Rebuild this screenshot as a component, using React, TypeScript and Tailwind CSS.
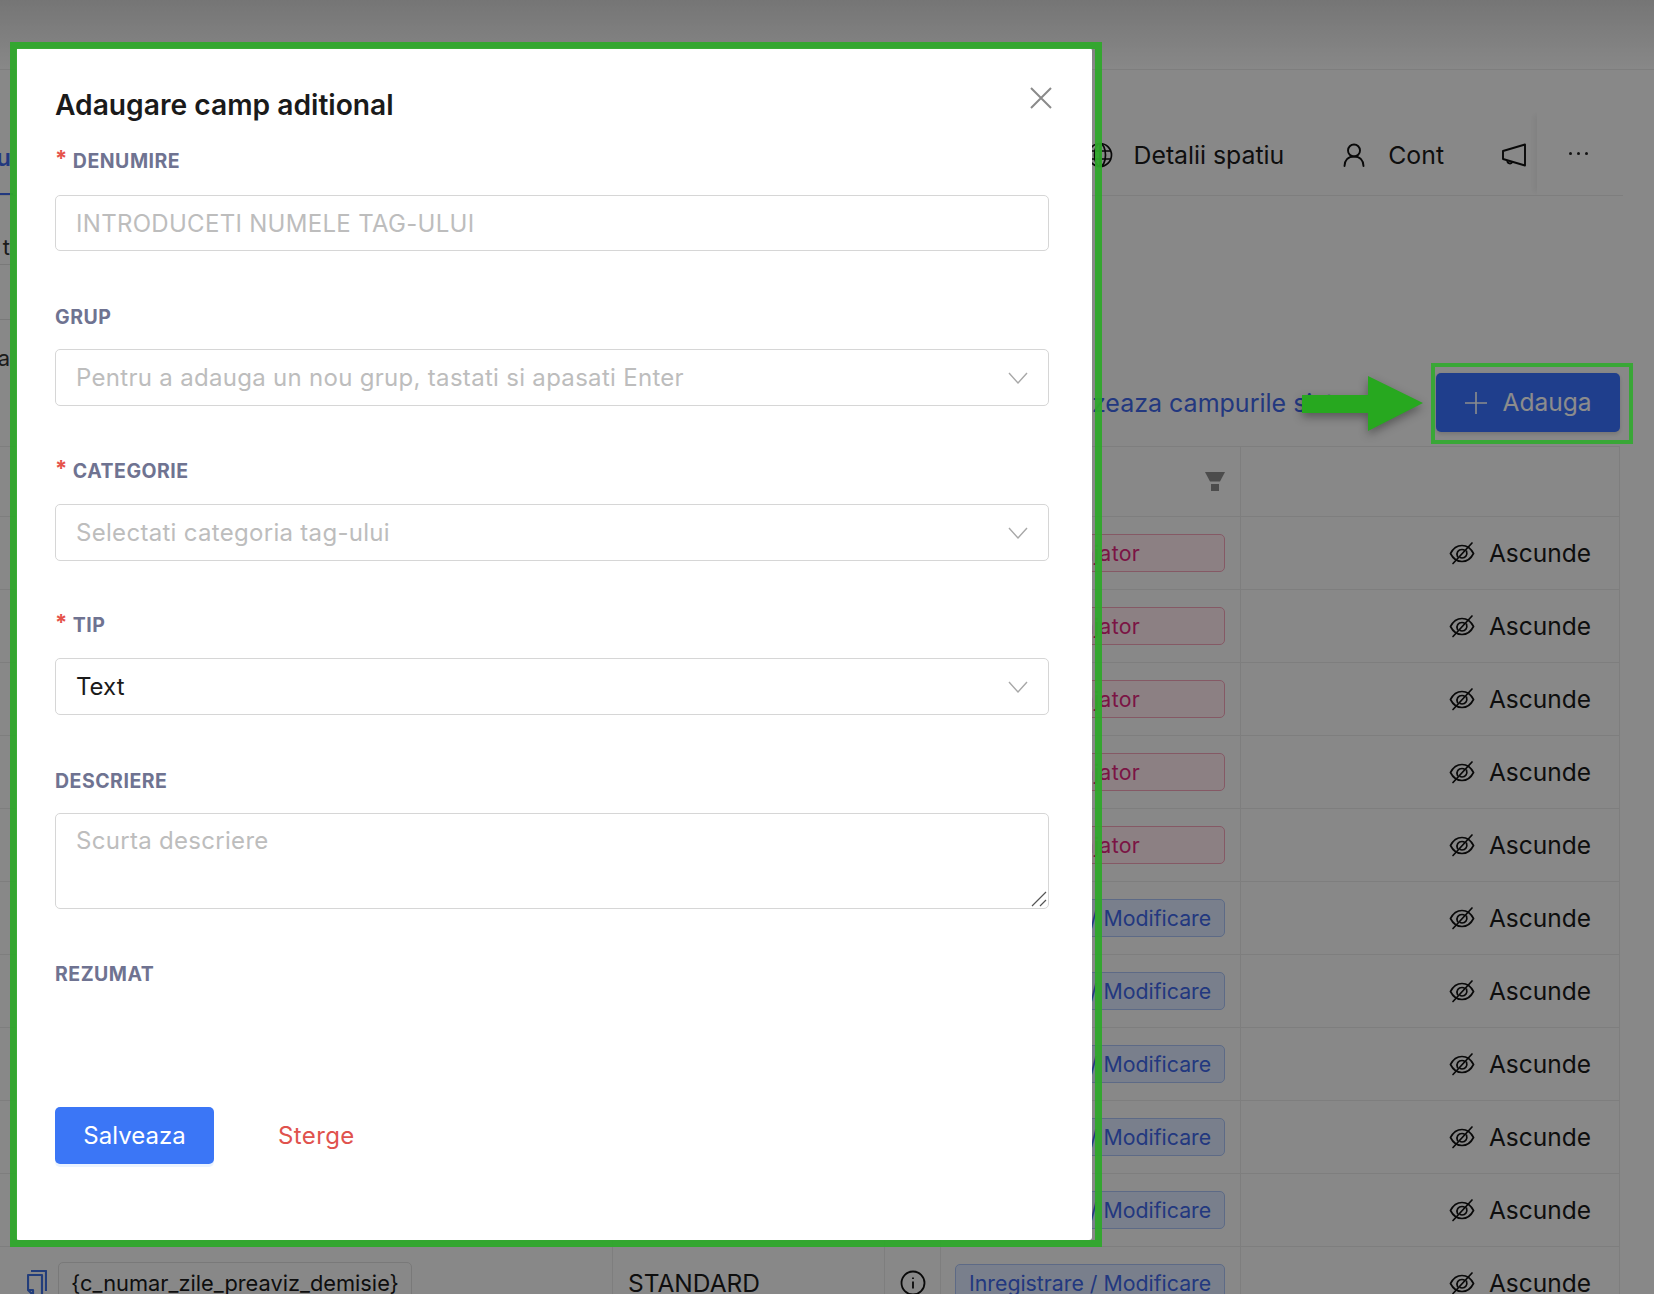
import React from "react";

const font = { fontFamily: "Inter, 'Noto Sans', sans-serif" };

function EyeOff() {
  return (
    <svg width="26" height="24" viewBox="0 0 26 24" fill="none" stroke="#111" strokeWidth="1.7" strokeLinecap="round" className="shrink-0">
      <path d="M1.5 12.5C4.5 6.5 8.5 4.5 13 4.5s8.5 2 11.5 8c-3 6-7 8-11.5 8s-8.5-2-11.5-8Z" />
      <path d="M8.5 15.5c-1.6-3.8.8-7 4.5-7 1.2 0 2 .3 2.8.9M17.5 10c1.2 4-1 7-4.5 7-.7 0-1.2-.1-1.8-.4" />
      <path d="M4 22.5 23 2" />
    </svg>
  );
}

function Chevron() {
  return (
    <svg width="20" height="12" viewBox="0 0 20 12" fill="none" stroke="#a8a8a8" strokeWidth="1.4" className="shrink-0">
      <path d="M1 1l9 10 9-10" />
    </svg>
  );
}

function Field({ label, required, className, children }: { label: string; required?: boolean; className: string; children?: React.ReactNode }) {
  return (
    <div className={className}>
      <div className="flex h-[24px] items-center text-[19.5px] leading-[24px] font-bold tracking-[0.5px] text-[#6f7391]">
        {required && <span className="mr-[5px] mt-[-6px] text-[22px] font-bold text-[#e5534b]">*</span>}
        {label}
      </div>
      {children}
    </div>
  );
}

function SelectBox({ text, dark, className }: { text: string; dark?: boolean; className: string }) {
  return (
    <div className={`flex h-[57px] items-center justify-between rounded-[5px] border border-[#d6d6d6] pl-[20px] pr-[20px] ${className}`}>
      <span className={dark ? "text-[24px] text-[#1a1a1a]" : "text-[24px] tracking-[0.3px] text-[#bdbdbd]"}>{text}</span>
      <Chevron />
    </div>
  );
}

function Row({ kind, name }: { kind: "pink" | "blue"; name?: boolean }) {
  const tag =
    kind === "pink"
      ? "border-[#f3a3b8] bg-[#ffe9ee] tracking-[0.3px] text-[#e0267c]"
      : "border-[#a9c2f5] bg-[#dce8ff] text-[#3f66e8]";
  return (
    <div className="flex h-[73px] shrink-0 border-b border-[#e6e6e6] text-[24.5px] text-[#1a1a1a]">
      <div className="flex w-[613px] shrink-0 items-center border-r border-[#e6e6e6] pl-[27px]">
        {name && (
          <>
            <svg width="20" height="26" viewBox="0 0 20 26" fill="none" stroke="#3f6fe0" strokeWidth="2.2" strokeLinejoin="round" className="shrink-0">
              <path d="M4 1h15v20M1 5h14v20H6l-5-5V5ZM1 20h5v5" />
            </svg>
            <span className="ml-[11px] rounded-[5px] border border-[#dcdcdc] bg-[#f8f8f8] px-[12px] py-[4px] text-[21.8px] whitespace-nowrap">{"{c_numar_zile_preaviz_demisie}"}</span>
          </>
        )}
      </div>
      <div className="flex w-[272px] shrink-0 items-center border-r border-[#e6e6e6] pl-[15px]">{name && "STANDARD"}</div>
      <div className="flex w-[56px] shrink-0 items-center justify-center border-r border-[#e6e6e6]">
        {name && (
          <svg width="26" height="26" viewBox="0 0 26 26" fill="none" stroke="#111" strokeWidth="1.8">
            <circle cx="13" cy="13" r="11.5" />
            <path d="M13 11.5v7M13 7.5v1.6" />
          </svg>
        )}
      </div>
      <div className="flex w-[300px] shrink-0 items-center border-r border-[#e6e6e6] pl-[14px]">
        <span className={`flex h-[38px] w-[270px] items-center rounded-[5px] border pl-[13px] pt-[2px] text-[21.3px] whitespace-nowrap ${tag}`}>
          {kind === "pink" ? "Pentru angajator" : "Inregistrare / Modificare"}
        </span>
      </div>
      <div className="flex w-[379px] shrink-0 items-center justify-end gap-[14px] border-r border-[#e6e6e6] pr-[28px]">
        <EyeOff />
        <span>Ascunde</span>
      </div>
    </div>
  );
}

export default function App() {
  const kinds: ("pink" | "blue")[] = ["pink", "pink", "pink", "pink", "pink", "blue", "blue", "blue", "blue", "blue"];
  return (
    <div className="relative h-[1294px] w-[1654px] overflow-hidden bg-[#f8f8f8]" style={font}>
      {/* page under the overlay */}
      <div className="h-[70px] border-b border-[#e6e6e6] bg-linear-to-b from-[#d6d6d6] to-[#f8f8f8]" />
      <div className="flex h-[126px] w-[1623px] items-end border-b border-[#e6e6e6]">
        <div className="flex h-[62px] w-[13px] shrink-0 justify-end overflow-hidden border-b-2 border-[#3f66e8] pt-[5px] pr-[2px] text-[24px] leading-[40px] font-semibold text-[#3f66e8]">
          <span className="whitespace-nowrap">ou</span>
        </div>
        <div className="ml-auto flex items-center pb-[20px] text-[24.8px] leading-[40px] text-[#1a1a1a]">
          <svg width="26" height="26" viewBox="0 0 26 26" fill="none" stroke="#111" strokeWidth="1.7">
            <circle cx="13" cy="13" r="11.5" />
            <ellipse cx="13" cy="13" rx="5.5" ry="11.5" />
            <path d="M13 1.5v23M2 9h22M2 17h22" />
          </svg>
          <span className="ml-[21px]">Detalii spatiu</span>
          <svg width="22" height="24" viewBox="0 0 22 24" fill="none" stroke="#111" strokeWidth="1.9" strokeLinecap="round" className="ml-[59px]">
            <circle cx="11" cy="7.5" r="6" />
            <path d="M1.5 23c0-5.5 3.5-9.5 9.5-9.5s9.5 4 9.5 9.5" />
          </svg>
          <span className="ml-[23px]">Cont</span>
          <svg width="26" height="24" viewBox="0 0 26 24" fill="none" stroke="#111" strokeWidth="1.9" strokeLinejoin="round" className="ml-[57px] mr-[10px]">
            <path d="M24 1.5v21L2 16V8l22-6.5Z" />
            <path d="M6.5 17.5c-.8 3 3.8 4.2 5 1" />
          </svg>
        </div>
        <div className="flex h-[83px] w-[86px] shrink-0 items-center justify-center bg-[#f8f8f8] pr-[4px] shadow-[-6px_0_6px_-3px_rgba(0,0,0,0.06)]">
          <div className="flex gap-[5px]">
            <span className="h-[3px] w-[3px] rounded-full bg-[#222]" />
            <span className="h-[3px] w-[3px] rounded-full bg-[#222]" />
            <span className="h-[3px] w-[3px] rounded-full bg-[#222]" />
          </div>
        </div>
      </div>
      <div className="flex h-[250px] w-[1620px]">
        <div className="flex w-[12px] shrink-0 flex-col overflow-hidden text-[22px] text-[#333]">
          <div className="flex h-[69px] items-center justify-end border-b border-[#dcdcdc] pt-[34px] pr-[2px]"><span>t</span></div>
          <div className="h-[55px] border-b border-[#dcdcdc]" />
          <div className="flex h-[57px] items-center justify-end pt-[20px] pr-[2px]"><span className="whitespace-nowrap">ta</span></div>
        </div>
        <div className="flex flex-1 items-end justify-end pb-[14px]">
          <span className="mb-[9px] mr-[66px] text-[25px] leading-[40px] whitespace-nowrap text-[#3f66e8]">Vizualizeaza campurile sistem</span>
          <button className="flex h-[59px] w-[184px] items-center justify-center gap-[16px] rounded-[5px] bg-[#3a72ff] text-[24.5px] text-white shadow-[0_2px_4px_rgba(0,0,0,0.15)]">
            <svg width="22" height="22" viewBox="0 0 22 22" fill="none" stroke="#fff" strokeWidth="1.6"><path d="M11 0v22M0 11h22" /></svg>
            Adauga
          </button>
        </div>
      </div>
      <div className="flex w-[1620px] flex-col border-t border-[#e6e6e6]">
        <div className="flex h-[70px] shrink-0 border-b border-[#e6e6e6]">
          <div className="flex w-[1241px] shrink-0 items-center justify-end border-r border-[#e6e6e6] pr-[15px]">
            <svg width="20" height="19" viewBox="0 0 20 19" fill="#8a8a8a"><path d="M0 0h20l-5 9.5H5L0 0Z" /><path d="M6 12h8v7H6z" /></svg>
          </div>
          <div className="flex-1 border-r border-[#e6e6e6]" />
        </div>
        {kinds.map((k, i) => <Row key={i} kind={k} />)}
        <Row kind="blue" name />
      </div>

      {/* dim overlay */}
      <div className="absolute inset-0 bg-black/45" />

      {/* modal */}
      <div className="absolute left-[16px] top-[48px] flex h-[1192px] w-[1076px] flex-col rounded-[3px] bg-white pl-[39px] pr-[43px]">
        <h2 className="mt-[39px] h-[36px] text-[28.2px] leading-[36px] font-semibold text-[#1a1a1a]">Adaugare camp aditional</h2>
        <svg width="24" height="24" viewBox="0 0 24 24" fill="none" stroke="#8a8a8a" strokeWidth="2" className="absolute left-[1013px] top-[38px]">
          <path d="M2 2l20 20M22 2L2 22" />
        </svg>
        <Field label="DENUMIRE" required className="mt-[26px]">
          <input
            readOnly
            placeholder="INTRODUCETI NUMELE TAG-ULUI"
            className="mt-[22px] block h-[56px] w-full rounded-[5px] border border-[#d6d6d6] pl-[20px] text-[24px] tracking-[0.3px] outline-none placeholder:text-[#bdbdbd]"
          />
        </Field>
        <Field label="GRUP" className="mt-[54px]">
          <SelectBox className="mt-[20px]" text="Pentru a adauga un nou grup, tastati si apasati Enter" />
        </Field>
        <Field label="CATEGORIE" required className="mt-[53px]">
          <SelectBox className="mt-[21px]" text="Selectati categoria tag-ului" />
        </Field>
        <Field label="TIP" required className="mt-[52px]">
          <SelectBox className="mt-[21px]" text="Text" dark />
        </Field>
        <Field label="DESCRIERE" className="mt-[54px]">
          <div className="relative mt-[20px]">
            <textarea
              readOnly
              placeholder="Scurta descriere"
              className="block h-[96px] w-full resize-none rounded-[5px] border border-[#d6d6d6] pl-[20px] pt-[9px] text-[24px] tracking-[0.3px] outline-none placeholder:text-[#bdbdbd]"
            />
            <svg width="16" height="16" viewBox="0 0 16 16" fill="none" stroke="#555" strokeWidth="1.2" className="absolute bottom-[2px] right-[2px]">
              <path d="M1 15 15 1M9 15l6-6" />
            </svg>
          </div>
        </Field>
        <Field label="REZUMAT" className="mt-[53px]" />
        <div className="mt-[121px] flex items-center">
          <button className="h-[57px] w-[159px] rounded-[5px] bg-[#3b76f6] text-[24px] text-white shadow-[0_3px_0_#eaf3ff]">Salveaza</button>
          <span className="ml-[64px] text-[24px] tracking-[0.4px] text-[#e0524d]">Sterge</span>
        </div>
      </div>

      {/* annotations drawn on the screenshot */}
      <div className="absolute left-[10px] top-[42px] h-[1205px] w-[1092px] border-[7px] border-[#2fa82b]/95" />
      <div className="absolute left-[1431px] top-[363px] h-[81px] w-[202px] border-[4px] border-[#39a737]" />
      <svg width="130" height="66" viewBox="0 0 130 66" className="absolute left-[1301px] top-[374px] drop-shadow-[0_4px_5px_rgba(0,0,0,0.35)]">
        <path d="M1 21h66V2l55 27-55 28V39H1Z" fill="#27a81f" />
      </svg>
    </div>
  );
}
